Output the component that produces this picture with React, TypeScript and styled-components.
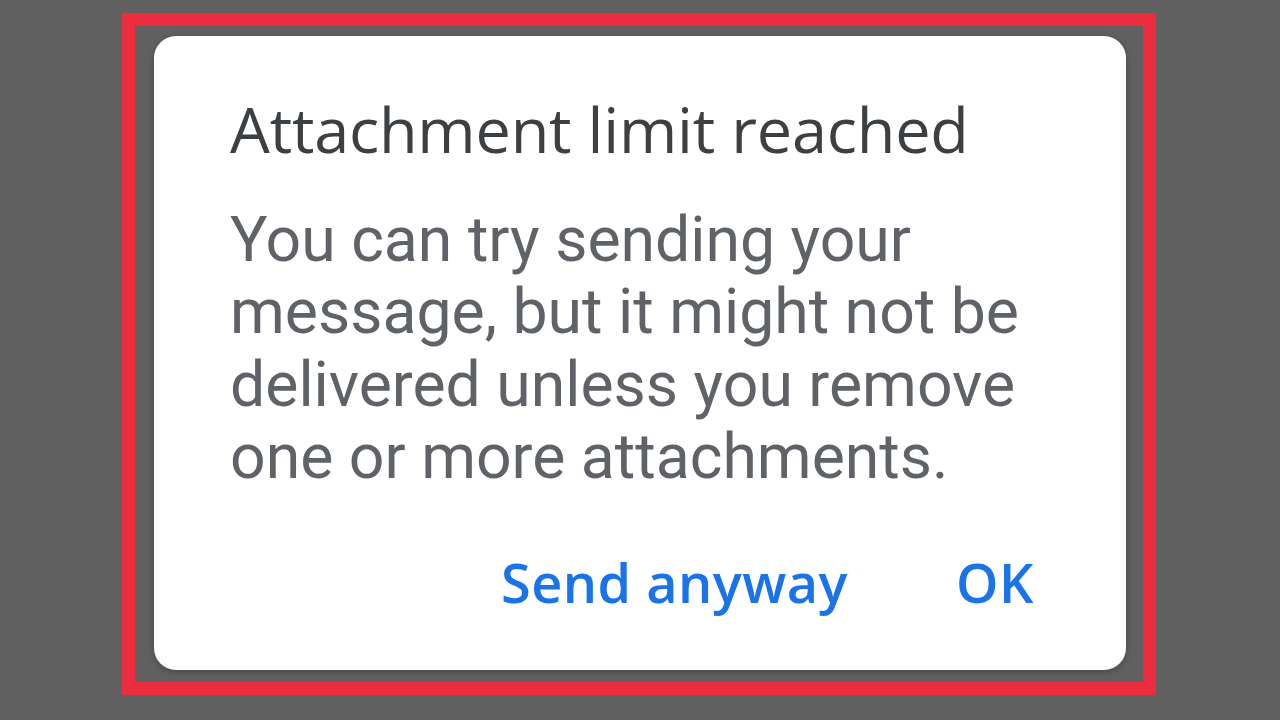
import styled, { createGlobalStyle } from "styled-components";

const GlobalStyle = createGlobalStyle`
  html, body {
    margin: 0;
    padding: 0;
    background: #5f605f;
  }
  body {
    width: 1280px;
    height: 720px;
    overflow: hidden;
  }
`;

const Page = styled.div`
  width: 1280px;
  height: 720px;
  padding: 13px 0 0 122px;
  box-sizing: border-box;
`;

const Frame = styled.div`
  width: 1034px;
  height: 682px;
  box-sizing: border-box;
  border: 13px solid #ec2c3f;
  padding: 10px 17px 12px 19px;
  display: flex;
`;

const Dialog = styled.div`
  flex: 1;
  background: #ffffff;
  border-radius: 22px;
  box-shadow: 0 2px 6px rgba(0, 0, 0, 0.25);
  padding: 57px 92px 0 76px;
  display: flex;
  flex-direction: column;
`;

const Title = styled.h2`
  margin: 0;
  font-family: "Open Sans", Lato, sans-serif;
  font-weight: 500;
  font-size: 63px;
  line-height: 72px;
  color: #3c4043;
  letter-spacing: -0.2px;
`;

const Message = styled.p`
  margin: 39px 0 0;
  font-family: Roboto, "Noto Sans", sans-serif;
  font-weight: 400;
  font-size: 62.5px;
  line-height: 72.33px;
  color: #5f6368;
`;

const Actions = styled.div`
  display: flex;
  justify-content: flex-end;
  align-items: center;
  gap: 108px;
  margin-top: 57px;
`;

const TextButton = styled.button`
  border: none;
  background: none;
  padding: 0;
  font-family: "Open Sans", Lato, sans-serif;
  font-weight: 600;
  font-size: 54px;
  line-height: 64px;
  letter-spacing: 0.5px;
  color: #1a73e8;
  cursor: pointer;
`;

export default function App() {
  return (
    <>
      <GlobalStyle />
      <Page>
        <Frame>
          <Dialog>
            <Title>Attachment limit reached</Title>
            <Message>
              You can try sending your
              <br />
              message, but it might not be
              <br />
              delivered unless you remove
              <br />
              one or more attachments.
            </Message>
            <Actions>
              <TextButton>Send anyway</TextButton>
              <TextButton>OK</TextButton>
            </Actions>
          </Dialog>
        </Frame>
      </Page>
    </>
  );
}
